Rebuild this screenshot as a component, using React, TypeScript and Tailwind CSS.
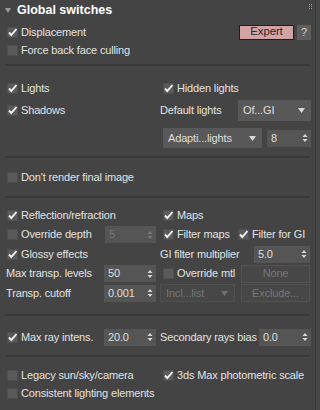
import React from 'react';

const font = { fontFamily: '"Liberation Sans", Arial, sans-serif' };

const Check = ({ on, dim }: { on?: boolean; dim?: boolean }) => (
  <span className="relative inline-flex w-[11px] h-[11px] shrink-0 bg-[#5a5a5a] border border-[#4e4e4e]">
    {on && (
      <svg viewBox="0 0 11 11" className="absolute -left-[1px] -top-[1px] w-[11px] h-[11px]">
        <path d="M2 5.5 L4.3 8 L9.5 2" fill="none" stroke={dim ? '#888' : '#f2f2f2'} strokeWidth="1.9" />
      </svg>
    )}
  </span>
);

const CheckRow = ({ on, label, className = '' }: { on?: boolean; label: string; className?: string }) => (
  <div className={`flex items-center gap-[3px] ${className}`}>
    <Check on={on} />
    <span className="text-[#e2e2e2] whitespace-nowrap">{label}</span>
  </div>
);

const Arrows = ({ dim }: { dim?: boolean }) => (
  <svg viewBox="0 0 6 10" className="w-[6px] h-[10px] shrink-0">
    <path d="M0.5 4 L3 1 L5.5 4 Z M0.5 6 L3 9 L5.5 6 Z" fill={dim ? '#7a7a7a' : '#d8d8d8'} />
  </svg>
);

const Spinner = ({ value, w, dim }: { value: string; w: string; dim?: boolean }) => (
  <div className={`flex items-center justify-between h-[17px] ${w} bg-[#555555] pl-[4px] pr-[3px]`}>
    <span className={dim ? 'text-[#777]' : 'text-[#dedede]'}>{value}</span>
    <Arrows dim={dim} />
  </div>
);

const Caret = ({ dim }: { dim?: boolean }) => (
  <svg viewBox="0 0 7 5" className="w-[7px] h-[5px] shrink-0">
    <path d="M0 0 L7 0 L3.5 5 Z" fill={dim ? '#6f6f6f' : '#d8d8d8'} />
  </svg>
);

const Dropdown = ({ value, w, dim, h = 'h-[20px]' }: { value: string; w: string; dim?: boolean; h?: string }) => (
  <div
    className={`flex items-center justify-between ${h} ${w} pl-[5px] pr-[6px] ${
      dim ? 'bg-[#474747] border border-[#505050]' : 'bg-[#585858]'
    }`}
  >
    <span className={dim ? 'text-[#767676]' : 'text-[#dedede]'}>{value}</span>
    <Caret dim={dim} />
  </div>
);

const DimButton = ({ label, w }: { label: string; w: string }) => (
  <div className={`flex items-center justify-center h-[18px] ${w} bg-[#474747] border border-[#525252] text-[#777]`}>
    {label}
  </div>
);

const Divider = () => (
  <div className="mx-[5px] h-[3px] border-t-2 border-[#393939] border-b border-b-[#474747]" />
);

export default function App() {
  return (
    <div
      className="flex w-[320px] h-[410px] bg-[#444444] text-[11px] leading-none tracking-[-0.15px] overflow-hidden"
      style={font}
    >
      <div className="w-[315px] flex flex-col">
        {/* header */}
        <div className="relative flex items-center h-[20px] pl-[5px]">
          <svg viewBox="0 0 6 5" className="w-[6px] h-[5px] mr-[6px]">
            <path d="M0 0 L6 0 L3 5 Z" fill="#9a9a9a" />
          </svg>
          <span className="text-white font-bold text-[12.5px] tracking-normal">Global switches</span>
          <div className="absolute right-[3px] top-[4px] grid grid-cols-2 gap-[1px]">
            {Array.from({ length: 6 }).map((_, i) => (
              <span key={i} className="w-[1px] h-[1px] bg-[#9a9a9a]" />
            ))}
          </div>
        </div>

        <div className="flex flex-col pt-[4px] pb-[6px]">
          <div className="flex items-center h-[16px] pl-[7px] pr-[4px]">
            <CheckRow on label="Displacement" />
            <div className="ml-auto flex items-center gap-[3px]">
              <div className="flex items-center justify-center w-[55px] h-[15px] bg-[#d2a3a5] border border-[#1e1e1e] text-[#2a2a2a] text-[11.5px]">
                Expert
              </div>
              <div className="flex items-center justify-center w-[14px] h-[15px] bg-[#5e5e5e] text-[#cfcfcf]">?</div>
            </div>
          </div>
          <CheckRow label="Force back face culling" className="h-[16px] mt-[2px] pl-[7px]" />
        </div>

        <Divider />

        <div className="grid grid-cols-[153px_1fr] pl-[7px] pr-[4px] pt-[11px] pb-[8px]">
          <div className="flex flex-col">
            <CheckRow on label="Lights" className="h-[20px]" />
            <CheckRow on label="Shadows" className="h-[21px] mt-[2px]" />
          </div>
          <div className="flex flex-col">
            <CheckRow on label="Hidden lights" className="h-[20px] pl-[3px]" />
            <div className="flex items-center justify-between h-[21px] mt-[2px]">
              <span className="text-[#e2e2e2]">Default lights</span>
              <Dropdown value="Of...GI" w="w-[73px]" h="h-[21px]" />
            </div>
          </div>
          <div />
          <div className="flex items-center justify-between mt-[7px] pl-[3px]">
            <Dropdown value="Adapti...lights" w="w-[99px]" />
            <Spinner value="8" w="w-[44px]" />
          </div>
        </div>

        <Divider />

        <CheckRow label="Don't render final image" className="h-[16px] pl-[7px] mt-[10px] mb-[11px]" />

        <Divider />

        <div className="grid grid-cols-[153px_1fr] gap-y-[1.5px] pl-[7px] pr-[5px] pt-[7px] pb-[12px]">
          <CheckRow on label="Reflection/refraction" className="h-[18px]" />
          <CheckRow on label="Maps" className="h-[18px] pl-[3px]" />

          <div className="flex items-center justify-between h-[18px] pr-[4px]">
            <CheckRow label="Override depth" />
            <Spinner value="5" w="w-[51px]" dim />
          </div>
          <div className="flex items-center h-[18px] pl-[3px]">
            <CheckRow on label="Filter maps" className="w-[75px]" />
            <CheckRow on label="Filter for GI" />
          </div>

          <CheckRow on label="Glossy effects" className="h-[18px]" />
          <div className="flex items-center justify-between h-[18px]">
            <span className="text-[#e2e2e2] whitespace-nowrap">GI filter multiplier</span>
            <Spinner value="5.0" w="w-[56px]" />
          </div>

          <div className="flex items-center justify-between h-[18px] pr-[4px]">
            <span className="text-[#e2e2e2] -ml-[1px] whitespace-nowrap">Max transp. levels</span>
            <Spinner value="50" w="w-[52px]" />
          </div>
          <div className="flex items-center justify-between h-[18px]">
            <CheckRow label="Override mtl" className="pl-[3px]" />
            <DimButton label="None" w="w-[69px]" />
          </div>

          <div className="flex items-center justify-between h-[18px] pr-[4px]">
            <span className="text-[#e2e2e2] -ml-[1px] whitespace-nowrap">Transp. cutoff</span>
            <Spinner value="0.001" w="w-[52px]" />
          </div>
          <div className="flex items-center justify-between h-[18px]">
            <Dropdown value="Incl...list" w="w-[75px]" h="h-[18px]" dim />
            <DimButton label="Exclude..." w="w-[69px]" />
          </div>
        </div>

        <Divider />

        <div className="grid grid-cols-[153px_1fr] pl-[7px] pr-[4px] pt-[11px] pb-[9px]">
          <div className="flex items-center justify-between h-[18px] pr-[4px]">
            <CheckRow on label="Max ray intens." />
            <Spinner value="20.0" w="w-[52px]" />
          </div>
          <div className="flex items-center justify-between h-[18px]">
            <span className="text-[#e2e2e2] whitespace-nowrap">Secondary rays bias</span>
            <Spinner value="0.0" w="w-[52px]" />
          </div>
        </div>

        <Divider />

        <div className="grid grid-cols-[153px_1fr] gap-y-[2px] pl-[7px] pr-[4px] pt-[9px]">
          <CheckRow label="Legacy sun/sky/camera" className="h-[16px]" />
          <CheckRow on label="3ds Max photometric scale" className="h-[16px] pl-[3px]" />
          <CheckRow label="Consistent lighting elements" className="h-[16px] col-span-2" />
        </div>
      </div>
      <div className="flex-1 border-l border-[#3a3a3a] bg-[#474747]" />
    </div>
  );
}
